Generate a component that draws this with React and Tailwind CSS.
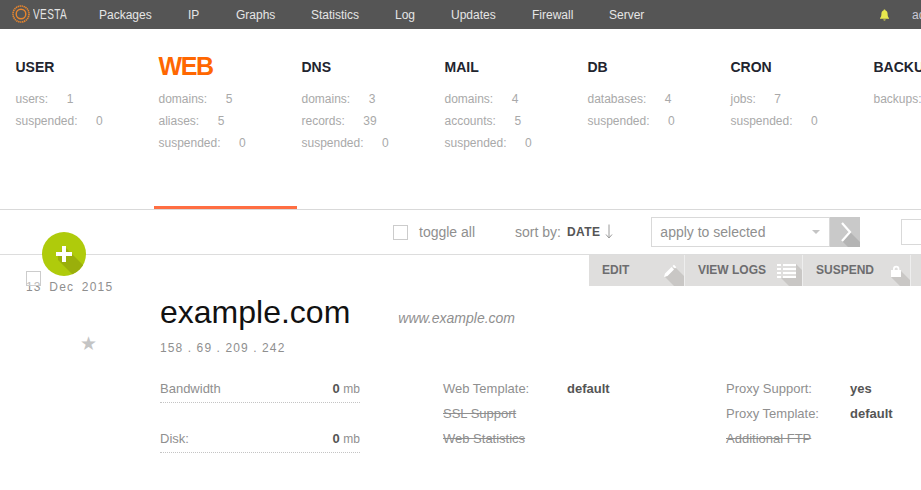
const font = { fontFamily: '"Liberation Sans", Arial, sans-serif' };

const navItems = [
  ['Packages', 'w-[89px]'],
  ['IP', 'w-[48px]'],
  ['Graphs', 'w-[75px]'],
  ['Statistics', 'w-[84px]'],
  ['Log', 'w-[56px]'],
  ['Updates', 'w-[81px]'],
  ['Firewall', 'w-[77px]'],
  ['Server', 'w-[60px]'],
];

const tabs = [
  { name: 'USER', rows: [['users', 1], ['suspended', 0]] },
  { name: 'WEB', active: true, rows: [['domains', 5], ['aliases', 5], ['suspended', 0]] },
  { name: 'DNS', rows: [['domains', 3], ['records', 39], ['suspended', 0]] },
  { name: 'MAIL', rows: [['domains', 4], ['accounts', 5], ['suspended', 0]] },
  { name: 'DB', rows: [['databases', 4], ['suspended', 0]] },
  { name: 'CRON', rows: [['jobs', 7], ['suspended', 0]] },
  { name: 'BACKUP', rows: [['backups', 0]] },
];

function Logo() {
  return (
    <div className="flex items-center w-[99px] pl-3 shrink-0 -mt-[1px]">
      <svg width="18" height="18" viewBox="0 0 18 18" fill="none" className="shrink-0">
        <circle cx="9" cy="9" r="8" stroke="#e8862e" strokeWidth="1.6" strokeDasharray="1.4 0.6" />
        <circle cx="9" cy="9" r="4.8" stroke="#e8862e" strokeWidth="1.4" />
      </svg>
      <span className="ml-[3px] text-[14px] leading-none text-[#e4e4e4] origin-left scale-x-[0.72] tracking-[0.5px]">VESTA</span>
    </div>
  );
}

function Tab({ tab }) {
  return (
    <div className={`w-[143px] shrink-0 h-[180px] pl-[4.5px] ${tab.active ? 'border-b-[3px] border-[#ff6e42]' : ''}`}>
      <div className={`h-[59px] flex items-end font-bold whitespace-nowrap ${tab.active ? 'text-[25px] leading-[29px] text-[#ff6701] pb-[7px] tracking-[-1.4px]' : 'text-[14px] leading-[16px] text-[#22242e] pb-[13px]'}`}>
        {tab.name}
      </div>
      <div>
        {tab.rows.map(([label, n]) => (
          <div key={label} className="h-[22px] text-[12px] leading-[22px] text-[#a9a9a9] whitespace-nowrap">
            {label}:<span className="ml-[18.5px]">{n}</span>
          </div>
        ))}
      </div>
    </div>
  );
}

function ActionIcon({ type }) {
  return (
    <svg width="34" height="31" viewBox="0 0 34 31" className="shrink-0">
      {type === 'pen' && (
        <>
          <path d="M15 22 L25 12 L34 21 L34 31 L24 31 Z" fill="#c9c7c5" />
          <path d="M14 22 L15 18.5 L21.5 12 L24 14.5 L17.5 21 Z M22.5 11 L24 9.8 L26.3 12.2 L25 13.5 Z" fill="#fff" />
        </>
      )}
      {type === 'list' && (
        <>
          <path d="M13 23 L28 23 L28 9 L34 15 L34 31 L21 31 Z" fill="#c9c7c5" />
          <path d="M9 9h4v2H9zM15 9h13v2H15zM9 13h4v2H9zM15 13h13v2H15zM9 17h4v2H9zM15 17h13v2H15zM9 21h4v2H9zM15 21h13v2H15z" fill="#fff" />
        </>
      )}
      {type === 'lock' && (
        <>
          <path d="M15 22 L25 22 L25 16 L34 25 L34 31 L24 31 Z" fill="#c9c7c5" />
          <path d="M17 15 V14 A3.2 3.2 0 0 1 23.4 14 V15 H25 V22 H15 V15 Z M18.7 15 H21.7 V14 A1.5 1.5 0 0 0 18.7 14 Z" fill="#fff" fillRule="evenodd" />
        </>
      )}
    </svg>
  );
}

function Action({ label, icon, width }) {
  return (
    <div className={`${width} h-full flex items-center justify-between pl-[13px] border-r border-[#eeeeee] shrink-0`}>
      <span className="text-[12px] font-bold text-[#6d6d6f] -mt-[1px]">{label}</span>
      <ActionIcon type={icon} />
    </div>
  );
}

function Stat({ label, value }) {
  return (
    <div className="w-[200px] h-[22px] mb-[28px] flex justify-between border-b border-dotted border-[#c4c4c4] text-[13px] leading-[15px] text-[#8f8f8f]">
      <span>{label}</span>
      <span><b className="text-[#555]">{value}</b> <span className="text-[12px]">mb</span></span>
    </div>
  );
}

function Info({ label, value, off }) {
  if (off) {
    return <div className="h-[25px] text-[13px] leading-[25px] text-[#8f8f8f] line-through">{label}</div>;
  }
  return (
    <div className="h-[25px] flex text-[13px] leading-[25px] text-[#8f8f8f]">
      <span className="w-[124px] shrink-0">{label}</span>
      <b className="text-[#555]">{value}</b>
    </div>
  );
}

export default function App() {
  return (
    <div className="relative w-[921px] h-[490px] overflow-hidden bg-white" style={font}>
      <div className="h-[29px] bg-[#555555] flex items-center">
        <Logo />
        {navItems.map(([item, w]) => (
          <div key={item} className={`${w} text-[12px] text-[#e6e6e6] shrink-0`}>{item}</div>
        ))}
        <svg width="11" height="12" viewBox="0 0 11 12" className="ml-[210px] shrink-0" fill="#e8e84e">
          <path d="M5.5 0.5 C6.2 0.5 6.5 1 6.5 1.5 C8 2 8.6 3.2 8.6 5 C8.6 7.5 9.3 8.2 10 9 V9.8 H1 V9 C1.7 8.2 2.4 7.5 2.4 5 C2.4 3.2 3 2 4.5 1.5 C4.5 1 4.8 0.5 5.5 0.5 Z M4.3 10.4 H6.7 C6.7 11.1 6.1 11.6 5.5 11.6 C4.9 11.6 4.3 11.1 4.3 10.4 Z" />
        </svg>
        <span className="ml-[22px] text-[12px] text-[#c9c9d6] shrink-0">admin</span>
      </div>

      <div className="flex pl-[11px] border-b border-[#d9d9d9] w-[1100px]">
        {tabs.map((t) => <Tab key={t.name} tab={t} />)}
      </div>

      <div className="h-[45px] border-b border-[#dddddd] flex items-center pl-[393px]">
        <div className="w-[15px] h-[15px] border border-[#cccccc] shrink-0" />
        <span className="ml-[11px] text-[14px] text-[#8f8f8f] whitespace-nowrap">toggle all</span>
        <span className="ml-[40px] text-[14px] text-[#8f8f8f] whitespace-nowrap">sort by:</span>
        <b className="ml-[6px] text-[12px] text-[#555] tracking-[0.4px]">DATE</b>
        <svg width="8" height="15" viewBox="0 0 8 15" className="ml-[5px] shrink-0 -mt-[1px]" fill="none" stroke="#9a9a9a">
          <path d="M4 0.5 V13.5 M1 10.5 L4 14 L7 10.5" />
        </svg>
        <div className="ml-[38px] w-[179px] h-[30px] border border-[#d9d9d9] flex items-center justify-between px-2 shrink-0">
          <span className="text-[14px] text-[#8f8f8f] whitespace-nowrap">apply to selected</span>
          <span className="w-0 h-0 mr-[1px] border-x-[4px] border-x-transparent border-t-[4px] border-t-[#c4c4c4]" />
        </div>
        <svg width="30" height="30" viewBox="0 0 30 30" className="shrink-0">
          <rect width="30" height="30" fill="#c9c9c9" />
          <path d="M12 24 L20 15 L30 25 L30 30 L18 30 Z" fill="#b4b4b4" />
          <path d="M12 6 L20 15 L12 24" fill="none" stroke="#fff" strokeWidth="2.2" />
        </svg>
        <div className="ml-[41px] w-[40px] h-[26px] border border-[#d9d9d9] shrink-0" />
      </div>

      <div className="relative">
        <div className="flex justify-end h-[31px] pl-[589px]">
          <div className="flex h-full w-[332px] bg-[#dfdedd] overflow-hidden">
            <Action label="EDIT" icon="pen" width="w-[96px]" />
            <Action label="VIEW LOGS" icon="list" width="w-[118px]" />
            <Action label="SUSPEND" icon="lock" width="w-[108px]" />
          </div>
        </div>

        <div className="flex">
          <div className="w-[160px] shrink-0 pl-[26px] -mt-[6px]">
            <div className="text-[12px] leading-[14px] tracking-[1.2px] text-[#8f8f8f] whitespace-nowrap [word-spacing:3px]">13 Dec 2015</div>
            <div className="mt-[39px] pl-[54px] text-[19px] leading-[22px] text-[#c4c4c4]">★</div>
          </div>
          <div className="flex-1">
            <div className="flex items-baseline mt-[7px]">
              <span className="text-[32px] leading-[38px] text-[#111111]">example.com</span>
              <span className="ml-[48px] text-[14px] italic text-[#8f8f8f]">www.example.com</span>
            </div>
            <div className="mt-[10px] text-[12px] leading-[14px] tracking-[1.1px] text-[#8f8f8f]">158 . 69 . 209 . 242</div>
            <div className="flex mt-[26px]">
              <div className="w-[283px] shrink-0">
                <Stat label="Bandwidth" value="0" />
                <Stat label="Disk:" value="0" />
              </div>
              <div className="w-[283px] shrink-0 -mt-[5px]">
                <Info label="Web Template:" value="default" />
                <Info label="SSL Support" off />
                <Info label="Web Statistics" off />
              </div>
              <div className="flex-1 -mt-[5px]">
                <Info label="Proxy Support:" value="yes" />
                <Info label="Proxy Template:" value="default" />
                <Info label="Additional FTP" off />
              </div>
            </div>
          </div>
        </div>

        <div className="absolute left-[26px] top-[16px] w-[15px] h-[15px] border border-[#cccccc] bg-white/40" />
      </div>

      <div className="absolute left-[42px] top-[232px] w-[44px] h-[44px] rounded-full overflow-hidden bg-[#afcb0b]">
        <svg width="44" height="44" viewBox="0 0 44 44">
          <path d="M16 22 L23 15 L44 36 L44 44 L32 44 L16 28 Z" fill="#9aaf0b" />
          <path d="M20 14 H24 V20 H30 V24 H24 V30 H20 V24 H14 V20 H20 Z" fill="#fff" />
        </svg>
      </div>
    </div>
  );
}
